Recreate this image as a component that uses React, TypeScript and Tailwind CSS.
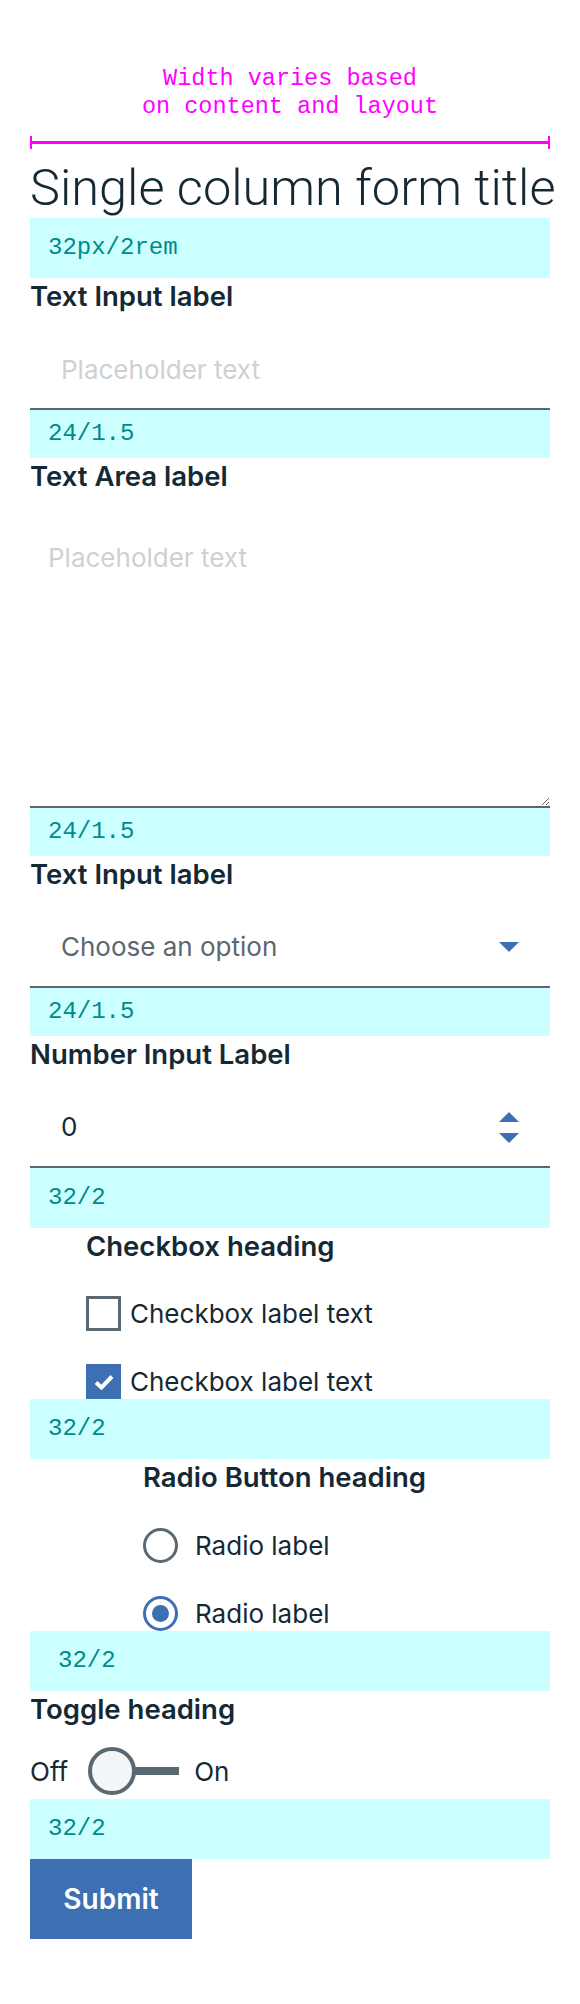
import React from 'react'

const mono = "font-['Liberation_Mono',monospace]"

function Spec({ text, tall = false, indent = false }: { text: string; tall?: boolean; indent?: boolean }) {
  return (
    <div
      className={`${mono} bg-[#ccffff] text-[24px] text-[#008b8b] ${tall ? 'h-[60px] leading-[60px]' : 'h-[48px] leading-[48px]'} ${indent ? 'pl-[28px]' : 'pl-[18px]'}`}
    >
      {text}
    </div>
  )
}

function Label({ children, className = '' }: { children: React.ReactNode; className?: string }) {
  return <div className={`text-[27.5px] font-semibold leading-[36px] text-[#152935] ${className}`}>{children}</div>
}

function Caret({ up = false }: { up?: boolean }) {
  return (
    <svg width="20" height="10" viewBox="0 0 20 10" className="block">
      {up ? <path d="M0 10 L10 0 L20 10 Z" fill="#3d70b2" /> : <path d="M0 0 L20 0 L10 10 Z" fill="#3d70b2" />}
    </svg>
  )
}

function Checkbox({ checked, label }: { checked?: boolean; label: string }) {
  return (
    <div className="flex h-[35px] items-center gap-[9px]">
      {checked ? (
        <div className="flex h-[35px] w-[35px] items-center justify-center bg-[#3d70b2]">
          <svg width="20" height="16" viewBox="0 0 20 16">
            <path d="M2 8.5 L7.5 13.5 L18 2.5" fill="none" stroke="#fff" strokeWidth="4" />
          </svg>
        </div>
      ) : (
        <div className="h-[35px] w-[35px] border-[3px] border-[#5a6872] bg-white" />
      )}
      <span className="text-[26px] leading-[36px]">{label}</span>
    </div>
  )
}

function Radio({ checked, label }: { checked?: boolean; label: string }) {
  return (
    <div className="flex h-[35px] items-center gap-[17px]">
      {checked ? (
        <div className="flex h-[35px] w-[35px] items-center justify-center rounded-full border-[3px] border-[#3d70b2]">
          <div className="h-[17px] w-[17px] rounded-full bg-[#3d70b2]" />
        </div>
      ) : (
        <div className="h-[35px] w-[35px] rounded-full border-[3px] border-[#5a6872]" />
      )}
      <span className="text-[26px] leading-[36px]">{label}</span>
    </div>
  )
}

export default function App() {
  return (
    <div className="min-h-screen bg-white font-['Inter',sans-serif] text-[#152935]">
      <div className="ml-[30px] w-[520px] pt-[65px] pb-[64px]">
        {/* width annotation */}
        <div className={`${mono} text-center text-[23.5px] leading-[28px] text-[#ff00ff]`}>
          Width varies based
          <br />
          on content and layout
        </div>
        <div className="mt-[15px] flex h-[13px] items-center">
          <div className="h-[13px] w-[2px] bg-[#ff00ff]" />
          <div className="h-[3px] flex-1 bg-[#ff00ff]" />
          <div className="h-[13px] w-[2px] bg-[#ff00ff]" />
        </div>

        <h1 className="mt-[11px] mb-[2px] whitespace-nowrap font-['Roboto',sans-serif] text-[50.5px] font-light leading-[56px]">
          Single column form title
        </h1>
        <Spec text="32px/2rem" tall />

        <Label>Text Input label</Label>
        <input
          className="block h-[96px] w-full border-b-2 border-[#5a6872] bg-transparent pt-[37px] pb-[21px] pl-[31px] text-[26px] leading-[36px] outline-none placeholder:text-[#cdd1d4]"
          placeholder="Placeholder text"
        />
        <Spec text="24/1.5" />

        <Label>Text Area label</Label>
        <textarea
          className="block h-[314px] w-full border-b-2 border-[#5a6872] bg-transparent pt-[46px] pl-[18px] text-[26px] leading-[36px] outline-none placeholder:text-[#cdd1d4]"
          placeholder="Placeholder text"
        />
        <Spec text="24/1.5" />

        <Label>Text Input label</Label>
        <div className="flex h-[96px] items-center justify-between border-b-2 border-[#5a6872] pt-[16px] pl-[31px] pr-[31px]">
          <span className="text-[26px] leading-[36px] text-[#5a6872]">Choose an option</span>
          <Caret />
        </div>
        <Spec text="24/1.5" />

        <Label>Number Input Label</Label>
        <div className="flex h-[96px] items-center justify-between border-b-2 border-[#5a6872] pt-[16px] pl-[31px] pr-[31px]">
          <span className="text-[26px] leading-[36px]">0</span>
          <div className="flex flex-col gap-[11px]">
            <Caret up />
            <Caret />
          </div>
        </div>
        <Spec text="32/2" tall />

        <div className="pl-[56px]">
          <Label>Checkbox heading</Label>
          <div className="mt-[32px] flex flex-col gap-[33px]">
            <Checkbox label="Checkbox label text" />
            <Checkbox checked label="Checkbox label text" />
          </div>
        </div>
        <Spec text="32/2" tall />

        <div className="pl-[113px]">
          <Label>Radio Button heading</Label>
          <div className="mt-[33px] flex flex-col gap-[33px]">
            <Radio label="Radio label" />
            <Radio checked label="Radio label" />
          </div>
        </div>
        <Spec text="32/2" tall indent />

        <Label>Toggle heading</Label>
        <div className="mt-[20px] mb-[4px] flex h-[48px] items-center text-[26px]">
          <span>Off</span>
          <div className="ml-[20px] h-[48px] w-[48px] rounded-full border-4 border-[#5a6872] bg-[#f3f6f9]" />
          <div className="-ml-[2px] h-[8px] w-[45px] bg-[#5a6872]" />
          <span className="ml-[15px]">On</span>
        </div>
        <Spec text="32/2" tall />

        <button className="flex h-[80px] w-[162px] items-center justify-center bg-[#3d70b2] text-[28px] font-semibold text-white">
          Submit
        </button>
      </div>
    </div>
  )
}
